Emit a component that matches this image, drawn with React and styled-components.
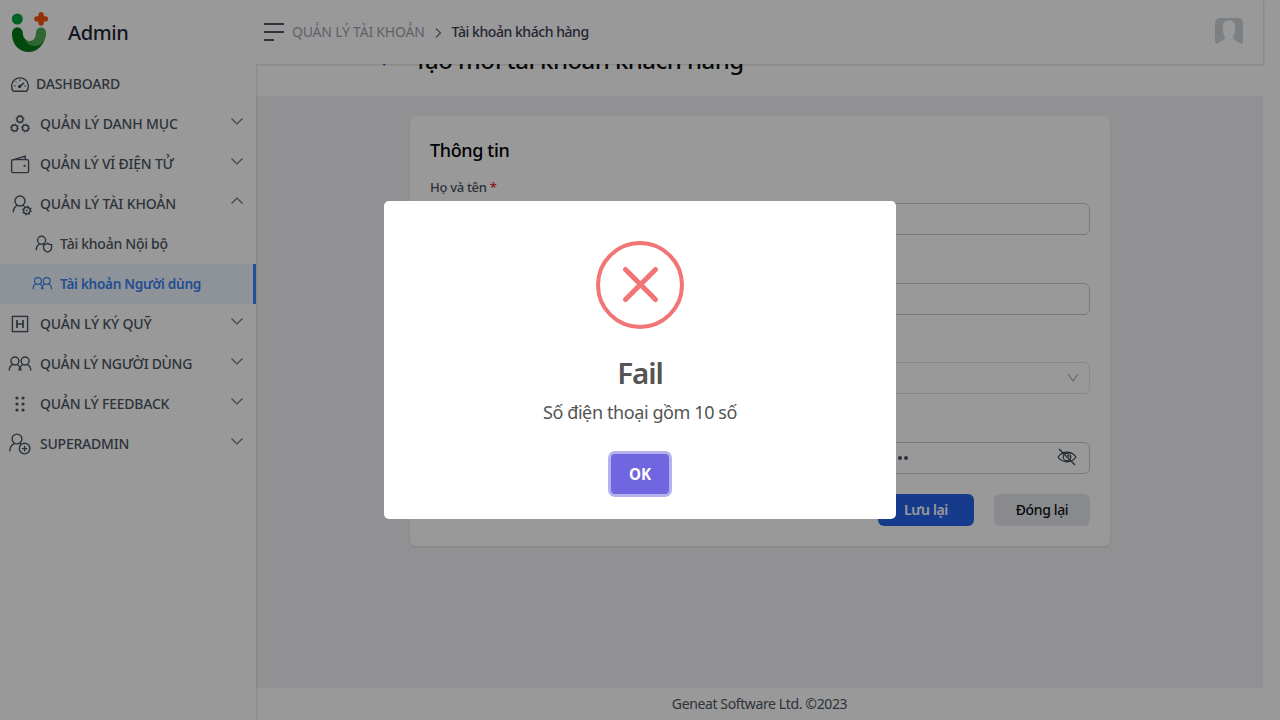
import React from "react";
import styled, { createGlobalStyle, css } from "styled-components";

const GlobalStyle = createGlobalStyle`
  *, *::before, *::after { box-sizing: border-box; }
  body {
    margin: 0;
    overflow: hidden;
    background: #fff;
    color: #4b5563;
    font-family: "Noto Sans", "Open Sans", sans-serif;
    font-size: 14px;
    line-height: 20px;
  }
`;

const Shell = styled.div`
  display: grid;
  grid-template-columns: 256px 1007px;
  height: 720px;
`;

const Sidebar = styled.aside`
  position: relative;
  z-index: 1;
  display: flex;
  flex-direction: column;
  background: #fff;
  box-shadow: 0 0 3px rgba(0, 0, 0, 0.2);
`;

const Brand = styled.div`
  display: flex;
  align-items: center;
  gap: 20px;
  height: 64px;
  padding: 0 0 0 11px;
`;

const BrandName = styled.span`
  padding-top: 2px;
  color: #1f2937;
  font-size: 20px;
  font-weight: 500;
  line-height: 28px;
  letter-spacing: -0.4px;
`;

const Menu = styled.nav`
  display: flex;
  flex-direction: column;
`;

const MenuItem = styled.div`
  display: flex;
  align-items: center;
  height: 40px;
  padding: 0 12px 0 ${(p) => (p.$nested ? 32 : 8)}px;
  font-weight: 500;
  ${(p) =>
    p.$active &&
    css`
      border-right: 3px solid #3b82f6;
      background: #ecf6fd;
      color: #3b82f6;
      font-size: 13.6px;
      font-weight: 600;
    `}
`;

const MenuIcon = styled.svg`
  flex: none;
  width: 24px;
  height: 24px;
  margin-right: ${(p) => p.$gap}px;
  fill: none;
  stroke: currentColor;
  stroke-width: 1.4;
`;

const MenuLabel = styled.span`
  flex: 1;
  white-space: nowrap;
  letter-spacing: ${(p) => p.$track || 0}px;
`;

const Caret = styled.svg`
  width: 14px;
  height: 14px;
  margin-top: -6px;
  fill: none;
  stroke: #6b7280;
  stroke-width: 1.2;
`;

const Column = styled.div`
  display: flex;
  flex-direction: column;
  height: 720px;
  min-width: 0;
`;

const Header = styled.header`
  position: relative;
  z-index: 1;
  display: flex;
  flex: none;
  align-items: center;
  height: 64px;
  padding: 0 20px 0 8px;
  background: #fff;
  box-shadow: 1px 1px 2px rgba(0, 0, 0, 0.14);
`;

const BurgerIcon = styled.svg`
  width: 20px;
  height: 20px;
  margin-right: 8px;
  stroke: #4b5563;
  stroke-width: 2;
`;

const Crumb = styled.span`
  color: ${(p) => (p.$current ? "#374151" : "#9ca3af")};
  font-weight: ${(p) => (p.$current ? 500 : 400)};
  letter-spacing: ${(p) => (p.$current ? -0.45 : -0.21)}px;
  white-space: nowrap;
`;

const CrumbArrow = styled.svg`
  width: 10px;
  height: 12px;
  margin: 1px 9px 0 8px;
  fill: none;
  stroke: #6b7280;
  stroke-width: 1.2;
`;

const Avatar = styled.svg`
  width: 28px;
  height: 28px;
  margin-left: auto;
`;

const Viewport = styled.main`
  display: flex;
  flex: 1;
  flex-direction: column;
  min-height: 0;
  overflow: hidden;
  background: #f2f2f5;
`;

const TitleBar = styled.div`
  display: flex;
  flex: none;
  align-items: center;
  gap: 23px;
  height: 74px;
  margin-top: -42px;
  padding: 0 0 5px 121px;
  background: #fff;
`;

const BackArrow = styled.svg`
  width: 14px;
  height: 14px;
  margin-top: 4px;
  fill: none;
  stroke: #2563eb;
  stroke-width: 2;
`;

const PageTitle = styled.h1`
  margin: 7px 0 0;
  color: #111;
  font-size: 24px;
  font-weight: 500;
  line-height: 32px;
  letter-spacing: -0.54px;
`;

const Card = styled.section`
  width: 700px;
  height: 430px;
  margin: 20px 0 0 154px;
  padding: 20px;
  border-radius: 6px;
  background: #fff;
  box-shadow: 0 1px 2px rgba(0, 0, 0, 0.12);
`;

const CardTitle = styled.h2`
  margin: 0 0 13px;
  color: #000;
  font-size: 18px;
  font-weight: 500;
  line-height: 29px;
  letter-spacing: -0.36px;
`;

const Field = styled.div`
  display: flex;
  flex-direction: column;
  height: 79.7px;
`;

const Label = styled.label`
  height: 25px;
  font-size: 13px;
  font-weight: 500;
  line-height: 18px;
  letter-spacing: -0.3px;
`;

const Required = styled.span`
  color: #dc2626;
`;

const Control = styled.div`
  display: flex;
  align-items: center;
  justify-content: flex-end;
  height: 32px;
  padding: 0 ${(p) => (p.$select ? 10 : 12)}px;
  border: 1px solid ${(p) => (p.$select ? "#e1e3e6" : "#c9ccd1")};
  border-radius: 6px;
  background: #fff;
`;

const Dots = styled.span`
  display: flex;
  gap: 2px;
  margin-right: 149px;
`;

const Dot = styled.i`
  width: 4px;
  height: 4px;
  border-radius: 50%;
  background: #4b5563;
`;

const SelectArrow = styled.svg`
  width: 12px;
  height: 12px;
  fill: none;
  stroke: #b5b7bb;
  stroke-width: 1.3;
`;

const EyeIcon = styled.svg`
  width: 20px;
  height: 20px;
  margin-top: -2px;
  fill: none;
  stroke: #374151;
  stroke-width: 1.2;
`;

const Actions = styled.div`
  display: flex;
  justify-content: flex-end;
  gap: 20px;
  margin-top: -2.8px;
`;

const Button = styled.button`
  width: 96px;
  height: 32px;
  padding: 0;
  border: 0;
  border-radius: 6px;
  background: ${(p) => (p.$primary ? "#2563eb" : "#e5e7eb")};
  color: ${(p) => (p.$primary ? "#fff" : "#111")};
  font: ${(p) => (p.$primary ? 600 : 500)} 14px/20px "Noto Sans", sans-serif;
  letter-spacing: -0.36px;
`;

const Footer = styled.footer`
  flex: none;
  height: 32px;
  background: #fff;
  line-height: 32px;
  text-align: center;
  letter-spacing: -0.38px;
`;

const Overlay = styled.div`
  position: fixed;
  inset: 0;
  z-index: 10;
  display: flex;
  align-items: center;
  justify-content: center;
  background: rgba(0, 0, 0, 0.4);
`;

const Dialog = styled.div`
  display: flex;
  flex-direction: column;
  align-items: center;
  width: 512px;
  height: 318px;
  padding-top: 40px;
  border-radius: 5px;
  background: #fff;
  color: #545454;
`;

const ErrorMark = styled.svg`
  flex: none;
  width: 88px;
  height: 88px;
  fill: none;
  stroke: #f27474;
`;

const DialogTitle = styled.h2`
  margin: 24px 0 0;
  font-size: 29.5px;
  font-weight: 600;
  line-height: 40px;
  letter-spacing: -1.1px;
`;

const DialogText = styled.p`
  margin: 4px 0 0;
  font-size: 18px;
  line-height: 30px;
  letter-spacing: -0.4px;
`;

const ConfirmButton = styled.button`
  width: 58px;
  height: 40px;
  margin-top: 27px;
  padding: 0;
  border: 0;
  border-radius: 4px;
  background: #7066e0;
  box-shadow: 0 0 0 3px rgba(112, 102, 224, 0.5);
  color: #fff;
  font: 700 15.2px/24px "Noto Sans", sans-serif;
`;

const ring = (cx, cy) => (
  <>
    <circle cx={cx} cy={cy} r="3" />
    <circle cx={cx} cy={cy} r="4" strokeWidth="1" strokeDasharray="1.2 1.94" />
  </>
);

const icons = {
  gauge: (
    <>
      <path d="M5.3 19.3A8.4 8.4 0 1 1 18.7 19.3Z" strokeLinejoin="round" />
      <path d="M11.5 14.6 16 10.8" strokeWidth="1.6" />
      <circle cx="11.6" cy="14.5" r="1" fill="currentColor" />
      <path d="M12 7.4v1.8M7.6 9.4l1 1M6 14h1.8M16.3 14H18" strokeWidth="1" />
    </>
  ),
  gears: (
    <>
      {ring(12, 7.2)}
      {ring(6.5, 16)}
      {ring(17.5, 16)}
    </>
  ),
  wallet: (
    <>
      <rect x="3.6" y="7.6" width="17" height="13" rx="1.6" />
      <path d="M4 8.2 17.3 4.3V7.6" />
      <path d="M15.6 13.8h2" strokeWidth="2" />
    </>
  ),
  userGear: (
    <>
      <circle cx="12" cy="9" r="5" />
      <path d="M5.2 20.2c.2-3.3 1.6-5.7 4-6.9M14.4 13.3l1.2.8" />
      <circle cx="18.8" cy="18.4" r="3.2" />
      <circle cx="18.8" cy="18.4" r="4.3" strokeDasharray="1.4 1.98" />
      <circle cx="18.8" cy="18.4" r=".9" fill="currentColor" stroke="none" />
    </>
  ),
  userShield: (
    <>
      <circle cx="9.6" cy="8.3" r="4" />
      <path d="M4.2 18.2c.1-2.9 1.3-5 3.4-6" />
      <path d="M11.6 12.6c1.6 0 3-.4 4-1.4 1 1 2.4 1.4 4 1.4v3c0 2.2-1.6 3.7-4 4.5-2.4-.8-4-2.3-4-4.5z" />
    </>
  ),
  users: (
    <>
      <circle cx="6.9" cy="9" r="4" />
      <circle cx="17.1" cy="9" r="4" />
      <path d="M1.2 18.6c0-3 1.4-5.2 3.6-6.3M9 12.3c1.5.8 2.5 2 3 3.5.5-1.5 1.5-2.7 3-3.5M19.2 12.3c2.2 1.1 3.600 3.300 3.600 6.300M10.900 18.600c.1-1.100.5-2 1.100-2.900.6.9 1 1.800 1.100 2.900" />
    </>
  ),
  letterBox: (
    <>
      <rect x="4.4" y="4.4" width="15.2" height="15.2" />
      <path d="M9 8v8M15 8v8M9 12h6" strokeWidth="1.7" />
    </>
  ),
  grip: (
    <g fill="currentColor" stroke="none">
      {[6, 12, 18].map((y) => (
        <React.Fragment key={y}>
          <circle cx="9" cy={y} r="1.6" />
          <circle cx="15" cy={y} r="1.6" />
        </React.Fragment>
      ))}
    </g>
  ),
  userPlus: (
    <>
      <circle cx="9" cy="7" r="4.9" />
      <path d="M1.8 19.2c.2-3.8 1.8-6.4 4.5-7.6M11.5 11.3l1.5.8" />
      <circle cx="16.6" cy="16.6" r="5.3" />
      <path d="M16.6 13.8v5.6M13.8 16.6h5.6" />
    </>
  ),
};

const items = [
  { icon: "gauge", label: "DASHBOARD", gap: 4, track: -0.16 },
  { icon: "gears", label: "QUẢN LÝ DANH MỤC", caret: "down", track: -0.13 },
  { icon: "wallet", label: "QUẢN LÝ VÍ ĐIỆN TỬ", caret: "down", track: -0.22 },
  { icon: "userGear", label: "QUẢN LÝ TÀI KHOẢN", caret: "up", track: -0.14 },
  { icon: "userShield", label: "Tài khoản Nội bộ", nested: true, gap: 4, track: -0.26 },
  { icon: "users", label: "Tài khoản Người dùng", nested: true, active: true, gap: 4, track: -0.31 },
  { icon: "letterBox", label: "QUẢN LÝ KÝ QUỸ", caret: "down", track: -0.17 },
  { icon: "users", label: "QUẢN LÝ NGƯỜI DÙNG", caret: "down", track: -0.31 },
  { icon: "grip", label: "QUẢN LÝ FEEDBACK", caret: "down", track: -0.22 },
  { icon: "userPlus", label: "SUPERADMIN", caret: "down", track: -0.22 },
];

function Logo() {
  return (
    <svg width="37" height="42" viewBox="0 0 37 42" fill="none">
      <circle cx="6.3" cy="8" r="5.5" fill="#00a63e" />
      <path
        d="M30.100 1c1.500 0 2.700 1.200 2.700 2.700v1.500h1.500a2.700 2.700 0 0 1 0 5.400h-1.500v1.500a2.700 2.700 0 0 1-5.400 0v-1.500h-1.500a2.700 2.700 0 0 1 0-5.400h1.500V3.700c0-1.500 1.200-2.700 2.700-2.700z"
        fill="#f0520a"
      />
      <path
        d="M1 21.700a5.400 5.400 0 0 1 10.800 0c0 5 3 8.300 7 8.300 3.500 0 6.500-1.700 8.500-4.300l5.800 4.500C30 36.500 24.500 41 18 41 8 41 1 33.200 1 23.200z"
        fill="#067a17"
      />
      <path
        d="M13.300 27.200c1.200 2 3.200 2.900 5.300 2.900 3.800 0 6.300-3 6.300-8.400a5.100 5.100 0 0 1 10.200 0c0 8.500-4.600 13.200-11.600 13.200-5 0-8.700-3-10.200-7.700z"
        fill="#50a858"
      />
    </svg>
  );
}

function SideMenu() {
  return (
    <Menu>
      {items.map(({ icon, label, caret, nested, active, gap = 8, track }) => (
        <MenuItem key={label} $nested={nested} $active={active}>
          <MenuIcon
            viewBox={nested && icon === "users" ? "0 -1.5 28 28" : "0 0 24 24"}
            $gap={gap}
          >
            {icons[icon]}
          </MenuIcon>
          <MenuLabel $track={track}>{label}</MenuLabel>
          {caret && (
            <Caret viewBox="0 0 14 14">
              <path d={caret === "down" ? "M1.5 4.5 7 10l5.5-5.5" : "M1.5 9.5 7 4l5.5 5.5"} />
            </Caret>
          )}
        </MenuItem>
      ))}
    </Menu>
  );
}

export default function App() {
  return (
    <>
      <GlobalStyle />
      <Shell>
        <Sidebar>
          <Brand>
            <Logo />
            <BrandName>Admin</BrandName>
          </Brand>
          <SideMenu />
        </Sidebar>
        <Column>
          <Header>
            <BurgerIcon viewBox="0 0 20 20">
              <path d="M0 2h20M0 10h20M0 18h10" />
            </BurgerIcon>
            <Crumb>QUẢN LÝ TÀI KHOẢN</Crumb>
            <CrumbArrow viewBox="0 0 10 12">
              <path d="M3 1.5 7.5 6 3 10.5" />
            </CrumbArrow>
            <Crumb $current>Tài khoản khách hàng</Crumb>
            <Avatar viewBox="0 0 28 28">
              <path
                d="M5 0h18a5 5 0 0 1 5 5v18.5q0 1.500-1.500 2.500c-2.500-2.500-8.500-3.200-8.500-6.500 0-2 2-3 2-7.500C20.800 6 19.500 2.500 14 2.500S7.200 6 8 12c0 4.500 2 5.500 2 7.500 0 3.300-6 4-8.500 6.500Q0 25 0 23.500V5a5 5 0 0 1 5-5z"
                fill="#d1d5db"
              />
            </Avatar>
          </Header>
          <Viewport>
            <TitleBar>
              <BackArrow viewBox="0 0 14 14">
                <path d="M8 1 2 7l6 6" />
              </BackArrow>
              <PageTitle>Tạo mới tài khoản khách hàng</PageTitle>
            </TitleBar>
            <Card>
              <CardTitle>Thông tin</CardTitle>
              <Field>
                <Label>
                  Họ và tên <Required>*</Required>
                </Label>
                <Control />
              </Field>
              <Field>
                <Label />
                <Control />
              </Field>
              <Field>
                <Label />
                <Control $select>
                  <SelectArrow viewBox="0 0 12 12">
                    <path d="M1.2 2 6 9l4.8-7" />
                  </SelectArrow>
                </Control>
              </Field>
              <Field>
                <Label />
                <Control>
                  <Dots>
                    {[0, 1, 2, 3, 4, 5, 6, 7].map((n) => (
                      <Dot key={n} />
                    ))}
                  </Dots>
                  <EyeIcon viewBox="0 0 20 20">
                    <path d="M1 10c2.300-3.200 5.300-4.900 9-4.900s6.700 1.700 9 4.900c-2.300 3.200-5.300 4.900-9 4.900S3.300 13.200 1 10zM2 2l16 16" />
                    <circle cx="10" cy="10" r="3.8" />
                    <path d="M10 8a2 2 0 0 1 2 2" />
                  </EyeIcon>
                </Control>
              </Field>
              <Actions>
                <Button $primary>Lưu lại</Button>
                <Button>Đóng lại</Button>
              </Actions>
            </Card>
          </Viewport>
          <Footer>Geneat Software Ltd. ©2023</Footer>
        </Column>
      </Shell>
      <Overlay>
        <Dialog role="dialog">
          <ErrorMark viewBox="0 0 88 88">
            <circle cx="44" cy="44" r="42" strokeWidth="4" />
            <path d="M29.5 28.5 59.5 58.5M59.5 28.5 29.5 58.5" strokeWidth="5" strokeLinecap="round" />
          </ErrorMark>
          <DialogTitle>Fail</DialogTitle>
          <DialogText>Số điện thoại gồm 10 số</DialogText>
          <ConfirmButton>OK</ConfirmButton>
        </Dialog>
      </Overlay>
    </>
  );
}
